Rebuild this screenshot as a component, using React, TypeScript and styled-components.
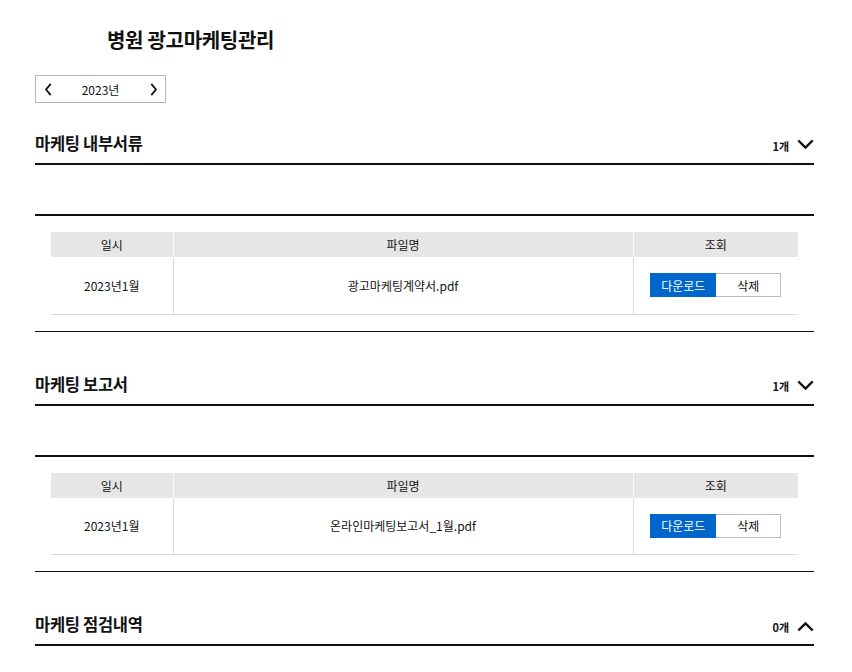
import React from "react";
import styled, { createGlobalStyle } from "styled-components";

const GlobalStyle = createGlobalStyle`
  * { box-sizing: border-box; }
  body {
    margin: 0;
    background: #fff;
    color: #111;
    font-family: "Noto Sans CJK KR", "Noto Sans", sans-serif;
  }
`;

const Page = styled.div`
  width: 852px;
  padding: 26px 38px 40px 35px;
`;

const PageTitle = styled.h1`
  margin: 0 0 21px 72px;
  font-size: 20px;
  line-height: 28px;
  font-weight: 700;
  letter-spacing: -0.3px;
`;

const YearPicker = styled.div`
  display: flex;
  align-items: center;
  justify-content: space-between;
  width: 131px;
  height: 28px;
  padding: 0 4px;
  border: 1px solid #b4b4b4;
  font-size: 12px;
`;

const ArrowButton = styled.button`
  display: flex;
  align-items: center;
  justify-content: center;
  width: 16px;
  height: 20px;
  padding: 0;
  border: none;
  background: transparent;
  cursor: pointer;
`;

const Sections = styled.div`
  display: flex;
  flex-direction: column;
  gap: 12px;
`;

const SectionHeader = styled.div`
  display: flex;
  align-items: flex-end;
  justify-content: space-between;
  height: 62px;
  padding: 28px 0 9px;
  border-bottom: 2px solid #111;
`;

const SectionTitle = styled.h2`
  margin: 0;
  font-size: 16.5px;
  line-height: 22px;
  font-weight: 700;
  letter-spacing: -0.3px;
`;

const Count = styled.div`
  display: flex;
  align-items: center;
  gap: 8px;
  font-size: 11px;
  font-weight: 700;
  line-height: 14px;
`;

const SectionBody = styled.div`
  margin-top: 49px;
  padding: 16px;
  border-top: 2px solid #111;
  border-bottom: 1px solid #111;
`;

const Table = styled.table`
  width: 100%;
  border-collapse: collapse;
  table-layout: fixed;
  font-size: 12px;
`;

const Th = styled.th<{ $w?: number }>`
  width: ${(p) => (p.$w ? `${p.$w}px` : "auto")};
  height: 25px;
  padding: 0;
  background: #e6e6e6;
  font-weight: 400;
  text-align: center;
  & + & { border-left: 1px solid #fafafa; }
`;

const Td = styled.td`
  height: 57px;
  padding: 0;
  text-align: center;
  border-bottom: 1px solid #dcdcdc;
  & + & { border-left: 1px solid #dcdcdc; }
`;

const ButtonGroup = styled.div`
  display: inline-flex;
  vertical-align: middle;
`;

const ActionButton = styled.button<{ $primary?: boolean }>`
  width: ${(p) => (p.$primary ? "66px" : "65px")};
  height: 24px;
  padding: 0;
  font-family: inherit;
  font-size: 12px;
  cursor: pointer;
  color: ${(p) => (p.$primary ? "#fff" : "#111")};
  background: ${(p) => (p.$primary ? "#0066cc" : "#fff")};
  border: 1px solid ${(p) => (p.$primary ? "#0066cc" : "#bdbdbd")};
  border-left-width: ${(p) => (p.$primary ? "1px" : "0")};
`;

const Chevron = ({ dir, size = 16 }: { dir: "left" | "right" | "up" | "down"; size?: number }) => {
  const paths: Record<string, string> = {
    down: "M2 4 L8 10 L14 4",
    up: "M2 11 L8 5 L14 11",
    left: "M10 2 L5 8 L10 14",
    right: "M6 2 L11 8 L6 14",
  };
  return (
    <svg width={size} height={size} viewBox="0 0 16 16" fill="none">
      <path d={paths[dir]} stroke="#111" strokeWidth={2.2} strokeLinecap="square" strokeLinejoin="miter" />
    </svg>
  );
};

type Doc = { date: string; file: string };
type Section = { title: string; open: boolean; docs: Doc[] };

const sections: Section[] = [
  { title: "마케팅 내부서류", open: true, docs: [{ date: "2023년1월", file: "광고마케팅계약서.pdf" }] },
  { title: "마케팅 보고서", open: true, docs: [{ date: "2023년1월", file: "온라인마케팅보고서_1월.pdf" }] },
  { title: "마케팅 점검내역", open: false, docs: [] },
];

export default function App() {
  return (
    <Page>
      <GlobalStyle />
      <PageTitle>병원 광고마케팅관리</PageTitle>
      <YearPicker>
        <ArrowButton aria-label="이전">
          <Chevron dir="left" size={13} />
        </ArrowButton>
        <span>2023년</span>
        <ArrowButton aria-label="다음">
          <Chevron dir="right" size={13} />
        </ArrowButton>
      </YearPicker>
      <Sections>
        {sections.map((s) => (
          <section key={s.title}>
            <SectionHeader>
              <SectionTitle>{s.title}</SectionTitle>
              <Count>
                <span>{s.docs.length}개</span>
                <Chevron dir={s.open ? "down" : "up"} size={17} />
              </Count>
            </SectionHeader>
            {s.open && (
              <SectionBody>
                <Table>
                  <thead>
                    <tr>
                      <Th $w={122}>일시</Th>
                      <Th>파일명</Th>
                      <Th $w={165}>조회</Th>
                    </tr>
                  </thead>
                  <tbody>
                    {s.docs.map((d) => (
                      <tr key={d.file}>
                        <Td>{d.date}</Td>
                        <Td>{d.file}</Td>
                        <Td>
                          <ButtonGroup>
                            <ActionButton $primary>다운로드</ActionButton>
                            <ActionButton>삭제</ActionButton>
                          </ButtonGroup>
                        </Td>
                      </tr>
                    ))}
                  </tbody>
                </Table>
              </SectionBody>
            )}
          </section>
        ))}
      </Sections>
    </Page>
  );
}
